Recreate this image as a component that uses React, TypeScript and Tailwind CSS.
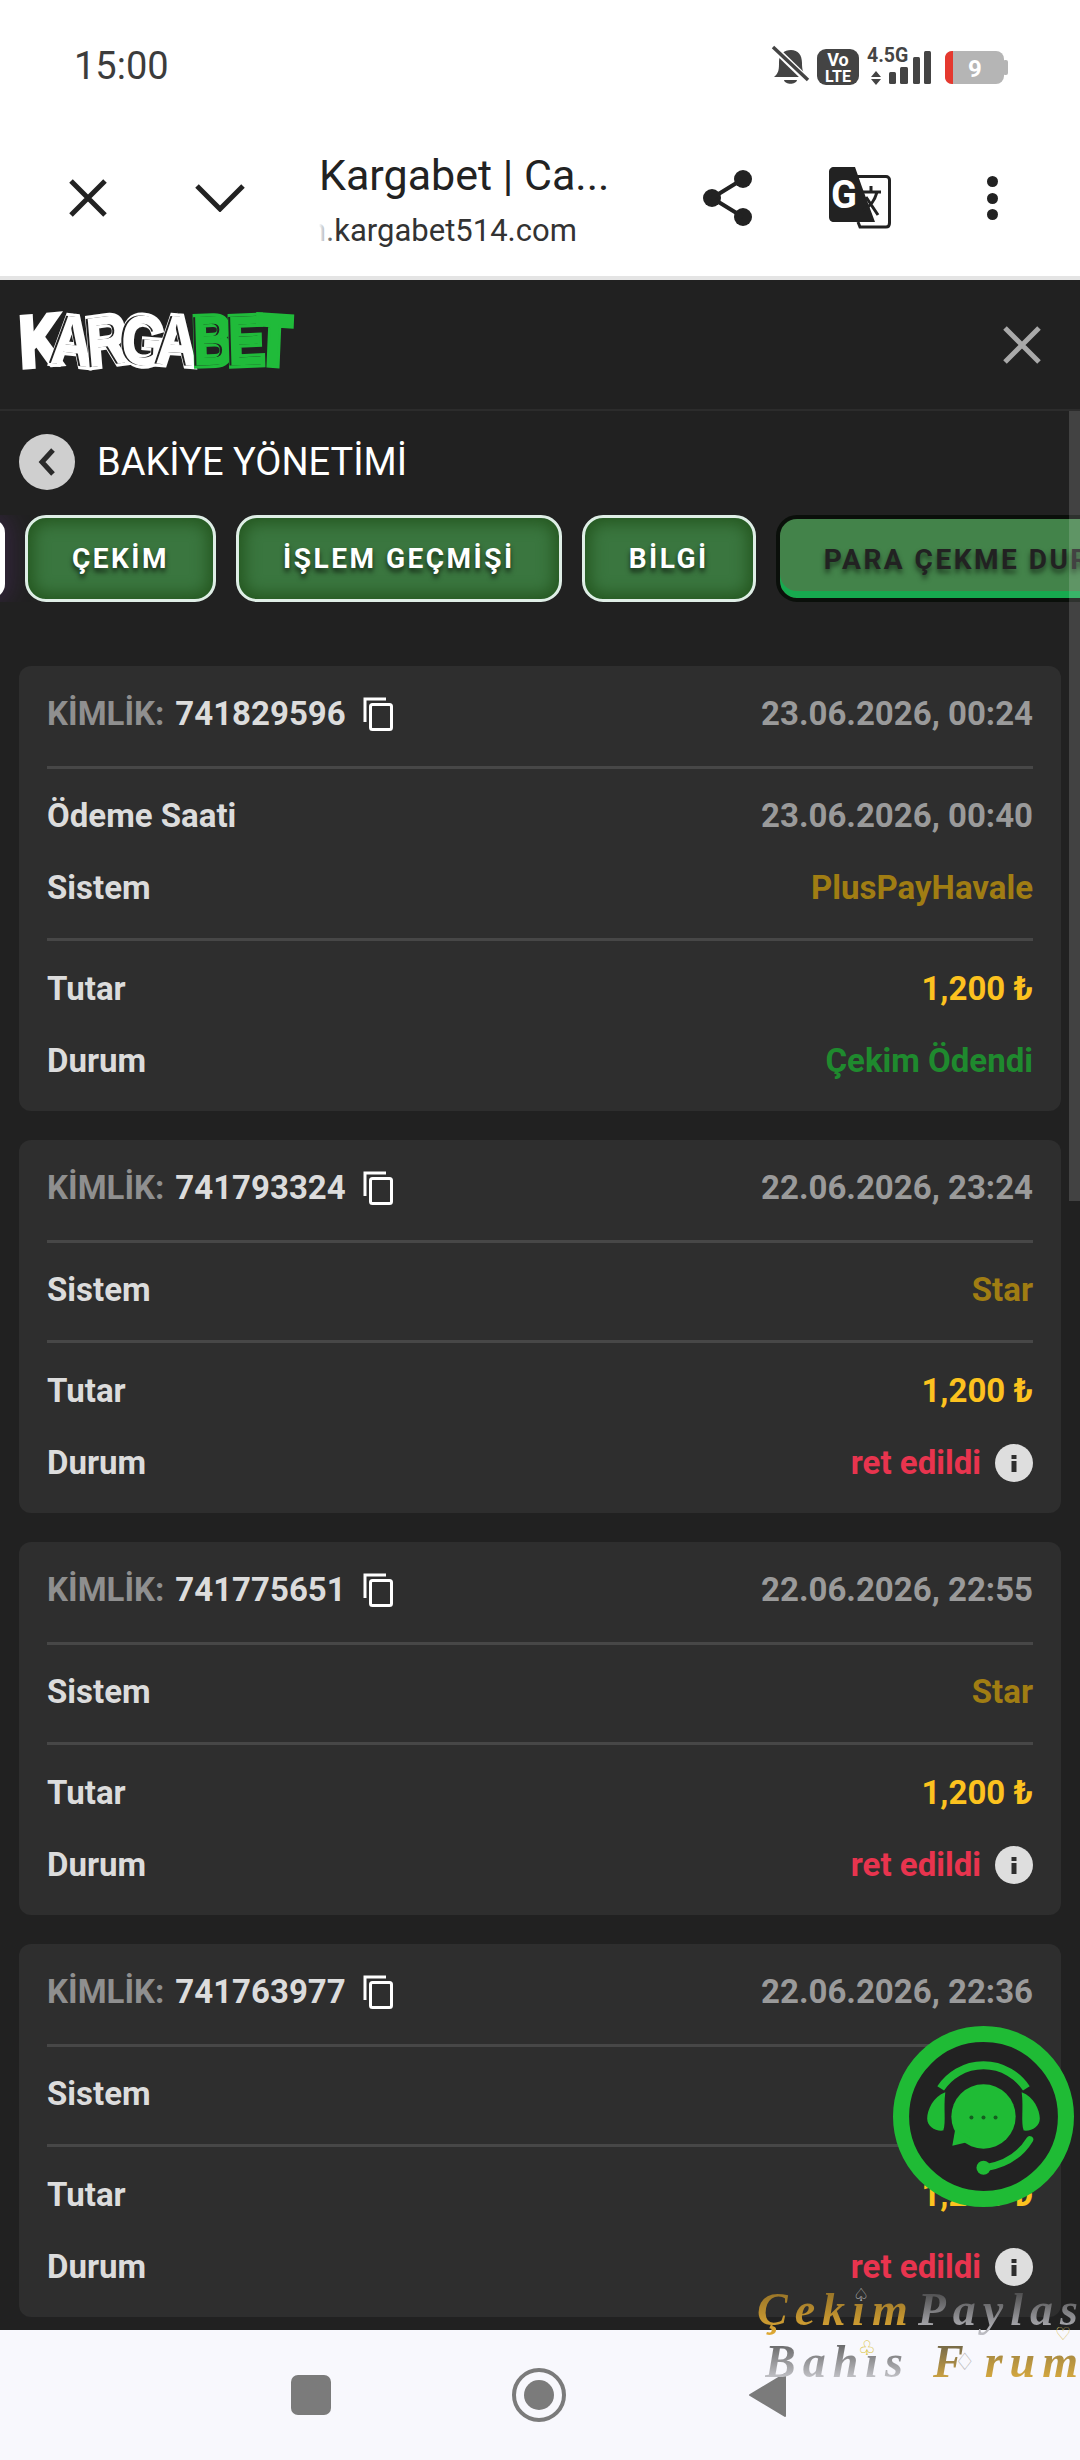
const ROBOTO = "font-['Roboto',sans-serif]"

type Row = { label: string; value: string; tone: string; info?: boolean }
type Ticket = { id: string; date: string; paidAt?: string; system: string; status: string; statusTone: string; info?: boolean }

const tickets: Ticket[] = [
  { id: "741829596", date: "23.06.2026, 00:24", paidAt: "23.06.2026, 00:40", system: "PlusPayHavale", status: "Çekim Ödendi", statusTone: "text-[#1f8a2e]" },
  { id: "741793324", date: "22.06.2026, 23:24", system: "Star", status: "ret edildi", statusTone: "text-[#e8344e]", info: true },
  { id: "741775651", date: "22.06.2026, 22:55", system: "Star", status: "ret edildi", statusTone: "text-[#e8344e]", info: true },
  { id: "741763977", date: "22.06.2026, 22:36", system: "Star", status: "ret edildi", statusTone: "text-[#e8344e]", info: true },
]

function StatusIcons() {
  return (
    <svg width="240" height="42" viewBox="0 0 240 42" className="block">
      {/* bell off */}
      <path d="M4 32 C9 28 9 24 9 17 C9 9 14 5 21 5 C28 5 32 10 32 18 C32 25 33 28 37 32 Z" fill="#444" />
      <path d="M14 35 H27 C26 40 15 40 14 35 Z" fill="#444" />
      <path d="M3 2 L37 35" stroke="#fff" strokeWidth="7" />
      <path d="M3 2 L38 35" stroke="#444" strokeWidth="3.5" />
      {/* volte */}
      <rect x="47" y="4" width="42" height="36" rx="9" fill="#444" />
      <text x="68" y="21" textAnchor="middle" fontFamily="Roboto" fontWeight="700" fontSize="18" fill="#fff">Vo</text>
      <text x="68" y="37" textAnchor="middle" fontFamily="Roboto" fontWeight="700" fontSize="16" fill="#fff">LTE</text>
      {/* network */}
      <text x="97" y="17" fontFamily="Roboto" fontWeight="700" fontSize="19.500" fill="#444">4.5G</text>
      <path d="M106 26 L111 32 H101 Z M101 34 H111 L106 40 Z" fill="#444" />
      <rect x="119" y="27" width="7" height="12" rx="1.5" fill="#444" />
      <rect x="130" y="22" width="8" height="17" rx="1.5" fill="#444" />
      <rect x="143" y="12" width="7" height="27" rx="1.5" fill="#444" />
      <rect x="154" y="6" width="7" height="33" rx="1.5" fill="#444" />
      {/* battery */}
      <rect x="175" y="6" width="59" height="33" rx="8" fill="#b5b5b5" />
      <rect x="233" y="15" width="5" height="15" rx="2" fill="#b5b5b5" />
      <path d="M182 6 H183 V39 H182 C178 39 175 36 175 32 V13 C175 9 178 6 182 6 Z" fill="#e5392f" />
      <text x="205" y="32" textAnchor="middle" fontFamily="Roboto" fontWeight="700" fontSize="24" fill="#fff">9</text>
    </svg>
  )
}

function Translate() {
  return (
    <svg width="62" height="62" viewBox="0 0 62 62" className="block">
      <path d="M27 9.5 H57 C59 9.5 60.5 11 60.5 13 V56 C60.5 58.500 59 60 57 60 H31 L29 55" fill="#fff" stroke="#222" strokeWidth="3" />
      <path d="M5 0 H26 L33 20 L46 55 H5 C2 55 0 53 0 50 V5 C0 2 2 0 5 0 Z" fill="#222" />
      <text x="2" y="41" fontFamily="Roboto" fontWeight="700" fontSize="38" fill="#fff">G</text>
      <path d="M33 25 H52 M42 19 V25 M48 25 C45 36 40 40 34 43 M37 30 L49 48" stroke="#222" strokeWidth="3" fill="none" />
    </svg>
  )
}

function BrowserBar() {
  return (
    <div className="flex h-[170px] items-center border-b-4 border-[#e4e4e4] pt-[10px] pl-[22px] pr-[22px]">
      <div className="flex w-[132px] justify-center">
        <svg width="38" height="38" viewBox="0 0 38 38"><path d="M2 2 L36 36 M36 2 L2 36" stroke="#222" strokeWidth="5" /></svg>
      </div>
      <div className="flex w-[132px] justify-center">
        <svg width="50" height="28" viewBox="0 0 50 28"><path d="M2 2 L25 25 L48 2" stroke="#222" strokeWidth="5" fill="none" /></svg>
      </div>
      <div className="ml-[33px] mt-[4px] flex-1">
        <div className={`${ROBOTO} text-[43px] leading-[46px] text-[#222]`}>Kargabet | Ca...</div>
        <div className={`${ROBOTO} relative mt-[15px] w-[262px] overflow-hidden whitespace-nowrap text-[31px] leading-[36px] text-[#333]`}>
          <span className="-ml-[10px] inline-block">n.kargabet514.com</span>
          <span className="absolute left-0 top-0 h-full w-[16px] bg-gradient-to-r from-white to-white/0" />
        </div>
      </div>
      <div className="flex w-[132px] justify-center">
        <svg width="50" height="58" viewBox="0 0 50 58">
          <circle cx="40" cy="10" r="9" fill="#222" />
          <circle cx="9" cy="29" r="9" fill="#222" />
          <circle cx="40" cy="48" r="9" fill="#222" />
          <path d="M40 10 L9 29 L40 48" stroke="#222" strokeWidth="4" fill="none" />
        </svg>
      </div>
      <div className="flex w-[132px] justify-center"><Translate /></div>
      <div className="flex w-[132px] flex-col items-center gap-[5.500px]">
        <span className="size-[11px] rounded-full bg-[#222]" />
        <span className="size-[11px] rounded-full bg-[#222]" />
        <span className="size-[11px] rounded-full bg-[#222]" />
      </div>
    </div>
  )
}

function Logo() {
  const letter = "inline-block [-webkit-text-stroke:5px_currentColor] [paint-order:stroke_fill]"
  return (
    <div className="-mt-[8px] flex origin-center scale-y-[1.26] items-center font-['Liberation_Sans',sans-serif] text-[56px] font-bold leading-none select-none">
      <span className={`${letter} -rotate-[4deg] text-white`}>K</span>
      <span className={`${letter} -ml-[9px] rotate-[5deg] text-white [text-shadow:-2px_0_0_#222]`}>A</span>
      <span className={`${letter} -ml-[6px] -rotate-[6deg] text-white [text-shadow:-2px_0_0_#222]`}>R</span>
      <span className={`${letter} -ml-[5px] rotate-[4deg] text-white [text-shadow:-2px_0_0_#222]`}>G</span>
      <span className={`${letter} -ml-[9px] rotate-[3deg] text-white [text-shadow:-2px_0_0_#222]`}>A</span>
      <span className={`${letter} -ml-[4px] -rotate-[2deg] text-[#20bb3a] [text-shadow:-2px_0_0_#222]`}>B</span>
      <span className={`${letter} -ml-[6px] -rotate-[2deg] text-[#20bb3a] [text-shadow:-2px_0_0_#222]`}>E</span>
      <span className={`${letter} -ml-[7px] rotate-[3deg] text-[#20bb3a]`}>T</span>
    </div>
  )
}

function Tab({ label }: { label: string }) {
  return (
    <div className={`${ROBOTO} flex h-[87px] shrink-0 items-center rounded-[21px] border-[3px] border-[#dfeee6] bg-[#3a763f] px-[44px] text-[28px] font-bold tracking-[2.5px] text-white shadow-[inset_0_0_16px_5px_#24561f] [text-shadow:0_4px_5px_rgba(0,0,0,0.65)]`}>
      {label}
    </div>
  )
}

function Tabs() {
  return (
    <div className="mt-[25px] flex gap-[20px] overflow-hidden">
      <div className="-ml-[45px] my-[4px] h-[79px] w-[50px] shrink-0 rounded-[14px] bg-white shadow-[0_0_22px_8px_rgba(110,50,150,0.22)]" />
      <Tab label="ÇEKİM" />
      <Tab label="İŞLEM GEÇMİŞİ" />
      <Tab label="BİLGİ" />
      <div className={`${ROBOTO} flex h-[87px] shrink-0 items-center whitespace-nowrap rounded-[21px] border-[4px] border-[#0a0f0a] bg-[#43834a] pl-[44px] pr-[44px] pt-[3px] text-[28px] font-bold tracking-[2.5px] text-[#222] shadow-[inset_0_-7px_0_#17a94f] [text-shadow:0_4px_5px_rgba(0,0,0,0.55)]`}>
        PARA ÇEKME DURUMU
      </div>
    </div>
  )
}

function CopyIcon() {
  return (
    <svg width="30" height="34" viewBox="0 0 30 34" className="block">
      <path d="M2 25 V2 H23" stroke="#fff" strokeWidth="3" fill="none" />
      <rect x="7.500" y="7.500" width="21" height="25" rx="2" stroke="#fff" strokeWidth="3" fill="none" />
    </svg>
  )
}

function InfoDot() {
  return (
    <span className="ml-[14px] flex size-[38px] items-center justify-center rounded-full bg-[#dedede]">
      <svg width="6" height="17" viewBox="0 0 6 17">
        <rect x="0.500" y="0" width="5" height="4" fill="#2e2e2e" />
        <rect x="0.500" y="6" width="5" height="11" fill="#2e2e2e" />
      </svg>
    </span>
  )
}

function InfoRow({ label, value, tone, info }: Row) {
  return (
    <div className="flex h-[72px] items-center justify-between">
      <span className="text-[#dcdcdc]">{label}</span>
      <span className="flex items-center">
        <span className={tone}>{value}</span>
        {info && <InfoDot />}
      </span>
    </div>
  )
}

function Card({ t }: { t: Ticket }) {
  return (
    <div className={`${ROBOTO} rounded-[12px] bg-[#2e2e2e] px-[28px] text-[33px] font-bold`}>
      <div className="mt-[12px] flex h-[72px] items-center justify-between">
        <span className="flex items-center">
          <span className="text-[#8f8f8f]">KİMLİK:</span>
          <span className="ml-[11px] text-[#dcdcdc]">{t.id}</span>
          <span className="ml-[17px]"><CopyIcon /></span>
        </span>
        <span className="text-[#9a9a9a]">{t.date}</span>
      </div>
      <div className="mt-[16px] h-[3px] bg-[#474747]" />
      <div className="mt-[11px] pb-[14px]">
        {t.paidAt && <InfoRow label="Ödeme Saati" value={t.paidAt} tone="text-[#9a9a9a]" />}
        <InfoRow label="Sistem" value={t.system} tone="text-[#a07d13]" />
      </div>
      <div className="h-[3px] bg-[#474747]" />
      <div className="mt-[12px] pb-[14px]">
        <InfoRow label="Tutar" value="1,200 ₺" tone="text-[#fcc21f]" />
        <InfoRow label="Durum" value={t.status} tone={t.statusTone} info={t.info} />
      </div>
    </div>
  )
}

function ChatButton() {
  return (
    <svg width="181" height="181" viewBox="0 0 180 180" className="absolute left-[893px] top-[2026px]">
      <circle cx="90" cy="90" r="82" fill="#222" stroke="#1fbb35" strokeWidth="16" />
      <path d="M47.400 62 A51 51 0 0 1 132.600 62" stroke="#1fbb35" strokeWidth="8" fill="none" />
      <path d="M52 66 C40 70 34 84 34 92 C34 100 42 105 50 104 C53 96 50 82 52 66 Z" fill="#1fbb35" />
      <path d="M128 66 C140 70 146 84 146 92 C146 100 138 105 130 104 C127 96 130 82 128 66 Z" fill="#1fbb35" />
      <circle cx="90" cy="90" r="32" fill="#1fbb35" />
      <path d="M62 102 L59 119 L80 114 Z" fill="#1fbb35" />
      <circle cx="78" cy="91" r="2" fill="#155f20" />
      <circle cx="90" cy="91" r="2" fill="#155f20" />
      <circle cx="102" cy="91" r="2" fill="#155f20" />
      <path d="M136 113 Q122 136 92 141" stroke="#1fbb35" strokeWidth="7" fill="none" strokeLinecap="round" />
      <circle cx="90" cy="141" r="7" fill="#1fbb35" />
    </svg>
  )
}

function Watermark() {
  const font = "font-['Liberation_Serif',serif] text-[46px] font-bold italic leading-none tracking-[7px] bg-clip-text text-transparent"
  return (
    <div className="absolute left-[757px] top-[2287px] w-[323px]">
      <div className="relative h-[56px] whitespace-nowrap">
        <span className={`${font} bg-gradient-to-b from-[#8a6a25] to-[#e0aa35]`}>Çekım</span>
        <span className={`${font} ml-[3px] bg-gradient-to-b from-[#3a3a3a] to-[#c0c0c6]`}>Paylas</span>
        <span className="absolute left-[96px] -top-[2px] text-[18px] leading-none text-[#bdbdbd]">♤</span>
        <span className="absolute left-[298px] top-[37px] text-[18px] leading-none text-[#d8c26a]">♡</span>
      </div>
      <div className="relative mt-[-4px] h-[56px] whitespace-nowrap pl-[8px]">
        <span className={`${font} bg-gradient-to-b from-[#555] to-[#dcdce2]`}>Bahıs</span>
        <span className={`${font} ml-[23px] bg-gradient-to-b from-[#5f5a45] to-[#e5b23c]`}>F</span>
        <span className={`${font} ml-[14px] bg-gradient-to-b from-[#8a7640] to-[#e5b23c]`}>rum</span>
        <span className="absolute left-[197px] top-[10px] text-[24px] leading-none text-[#bbb]">♢</span>
        <span className="absolute left-[101px] -top-[1px] text-[20px] leading-none text-[#d9c23a]">♧</span>
      </div>
    </div>
  )
}

export default function App() {
  return (
    <div className="relative flex h-[2460px] w-[1080px] flex-col overflow-hidden bg-white">
      <div className="flex h-[110px] items-center justify-between pl-[74px] pr-[70px] pt-[22px]">
        <span className={`${ROBOTO} text-[38px] text-[#3c3c3c]`}>15:00</span>
        <StatusIcons />
      </div>
      <BrowserBar />

      <main className="flex min-h-0 flex-1 flex-col overflow-hidden bg-[#212121]">
        <div className="flex h-[131px] shrink-0 items-center justify-between border-b-[2px] border-[#2c2c2c] pl-[20px] pr-[39px]">
          <Logo />
          <svg width="38" height="38" viewBox="0 0 38 38"><path d="M2 2 L36 36 M36 2 L2 36" stroke="#a9a9a9" strokeWidth="5" /></svg>
        </div>
        <div className="mt-[23px] flex items-center pl-[19px]">
          <span className="flex size-[56px] items-center justify-center rounded-full bg-[#cfcfcf]">
            <svg width="20" height="30" viewBox="0 0 20 30"><path d="M16 3 L5 15 L16 27" stroke="#2a2a2a" strokeWidth="5" fill="none" /></svg>
          </span>
          <span className={`${ROBOTO} ml-[22px] text-[38px] leading-[44px] text-white`}>BAKİYE YÖNETİMİ</span>
        </div>
        <Tabs />
        <div className="mt-[64px] flex flex-col gap-[29px] px-[19px]">
          {tickets.map((t) => <Card key={t.id} t={t} />)}
        </div>
      </main>

      <nav className="flex h-[130px] shrink-0 items-center justify-center bg-[#f8f8fd] pr-[2px]">
        <div className="flex w-[228px] justify-center"><span className="size-[40px] rounded-[7px] bg-[#7b7b7b]" /></div>
        <div className="flex w-[228px] justify-center">
          <span className="flex size-[54px] items-center justify-center rounded-full border-[4px] border-[#7b7b7b]">
            <span className="size-[30px] rounded-full bg-[#7b7b7b]" />
          </span>
        </div>
        <div className="flex w-[228px] justify-center">
          <svg width="38" height="46" viewBox="0 0 38 46"><path d="M37 2 V44 L2 23 Z" fill="#7b7b7b" stroke="#7b7b7b" strokeWidth="2" strokeLinejoin="round" /></svg>
        </div>
      </nav>

      {/* kaydırma çubuğu */}
      <div className="absolute left-[1069px] top-[411px] h-[790px] w-[11px] bg-white/15" />
      <ChatButton />
      <Watermark />
    </div>
  )
}
